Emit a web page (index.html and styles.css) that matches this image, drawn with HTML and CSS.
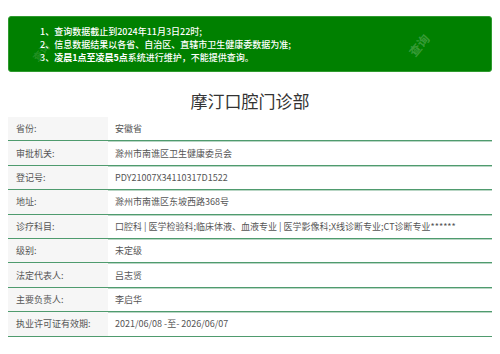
FILE: index.html
```html
<!DOCTYPE html>
<html lang="zh">
<head>
<meta charset="utf-8">
<link rel="stylesheet" href="styles.css">
</head>
<body>
<div class="notice">
  <p class="line">1、查询数据截止到2024年11月3日22时;</p>
  <p class="line">2、信息数据结果以各省、自治区、直辖市卫生健康委数据为准;</p>
  <p class="line">3、<b class="strong">凌晨1点至凌晨5点</b>系统进行维护，不能提供查询。</p>
  <span class="mark mark-a">查询</span>
  <span class="mark mark-b">查询</span>
</div>
<h1 class="title">摩汀口腔门诊部</h1>
<div class="info">
  <div class="row"><div class="label">省份:</div><div class="value">安徽省</div></div>
  <div class="row"><div class="label">审批机关:</div><div class="value">滁州市南谯区卫生健康委员会</div></div>
  <div class="row"><div class="label">登记号:</div><div class="value">PDY21007X34110317D1522</div></div>
  <div class="row"><div class="label">地址:</div><div class="value">滁州市南谯区东坡西路368号</div></div>
  <div class="row"><div class="label">诊疗科目:</div><div class="value">口腔科 | 医学检验科;临床体液、血液专业 | 医学影像科;X线诊断专业;CT诊断专业******</div></div>
  <div class="row"><div class="label">级别:</div><div class="value">未定级</div></div>
  <div class="row"><div class="label">法定代表人:</div><div class="value">吕志贤</div></div>
  <div class="row"><div class="label">主要负责人:</div><div class="value">李启华</div></div>
  <div class="row"><div class="label">执业许可证有效期:</div><div class="value">2021/06/08 -至- 2026/06/07</div></div>
</div>
</body>
</html>
```
FILE: styles.css
```css
html, body {
  margin: 0;
  padding: 0;
  background: #fff;
}
body {
  padding: 16px 8px 0 8px;
  font-family: "Noto Sans CJK SC", "Noto Sans", sans-serif;
  color: #555;
}
.notice {
  position: relative;
  background: #008000;
  border: 1px solid #2f9a2f;
  border-radius: 3px;
  height: 56px;
  box-sizing: border-box;
  padding: 8px 0 0 31px;
  overflow: hidden;
}
.line {
  margin: 0;
  color: #fff;
  font-size: 9px;
  line-height: 13px;
  font-weight: 500;
  white-space: nowrap;
}
.strong {
  font-weight: 700;
}
.mark {
  position: absolute;
  color: rgba(255, 255, 255, 0.22);
  font-size: 12px;
  line-height: 12px;
  transform: rotate(-50deg);
  font-weight: 700;
}
.mark-a { left: 398px; top: 22px; }
.mark-b { left: 22px; top: 30px; font-size: 10px; line-height: 10px; color: rgba(255,255,255,0.15); }
.title {
  margin: 16px 0 3px 0;
  height: 26px;
  line-height: 26px;
  text-align: center;
  font-size: 17px;
  font-weight: 400;
  color: #333;
}
.info {
  display: flex;
  flex-direction: column;
}
.row {
  display: flex;
  height: 24.4px;
  box-sizing: border-box;
  border-bottom: 1px solid #4f9b6e;
  box-shadow: 0 1px 0 #b9d6c5;
  font-size: 9px;
}
.label {
  width: 100px;
  flex: none;
  background: #f6f6f6;
  padding-left: 8px;
  box-sizing: border-box;
  display: flex;
  align-items: center;
}
.value {
  flex: 1;
  padding-left: 7px;
  display: flex;
  align-items: center;
  white-space: nowrap;
}
```
